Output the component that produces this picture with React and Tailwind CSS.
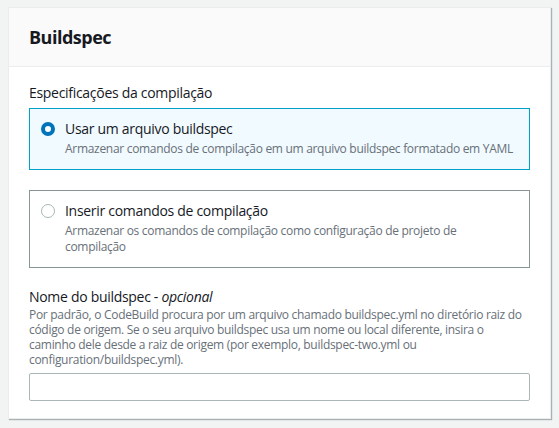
import React, { useState } from 'react';

const options = [
  {
    id: 'file',
    label: 'Usar um arquivo buildspec',
    description: 'Armazenar comandos de compilação em um arquivo buildspec formatado em YAML',
  },
  {
    id: 'commands',
    label: 'Inserir comandos de compilação',
    description: 'Armazenar os comandos de compilação como configuração de projeto de compilação',
  },
];

function Radio({ checked }) {
  if (checked) {
    return <span className="mt-[3px] block h-[14px] w-[14px] shrink-0 rounded-full border-[4px] border-[#0073bb] bg-white" />;
  }
  return <span className="mt-[3px] block h-[14px] w-[14px] shrink-0 rounded-full border-[1.5px] border-[#aab7b8] bg-white" />;
}

export default function App() {
  const [selected, setSelected] = useState('file');

  return (
    <div className="min-h-[428px] bg-[#f2f3f3] px-2 pt-[7px] font-['Open_Sans',sans-serif] tracking-[-0.3px] text-[#16191f]">
      <div className="border border-[#eaeded] bg-white shadow-[1px_1px_1px_0_rgba(0,28,36,0.3)]">
        <div className="flex h-[59px] items-center border-b border-[#eaeded] bg-[#fafafa] px-5">
          <h2 className="text-[18px] font-bold tracking-[-0.5px]">Buildspec</h2>
        </div>

        <div className="px-5 pb-[17px] pt-[16px]">
          <div className="text-[14px] leading-[20px]">Especificações da compilação</div>

          <div className="mt-[5px] flex flex-col gap-[20px]">
            {options.map(opt => {
              const checked = selected === opt.id;
              return (
                <label
                  key={opt.id}
                  onClick={() => setSelected(opt.id)}
                  className={
                    checked
                      ? 'flex cursor-pointer gap-[10px] border border-[#00a1c9] bg-[#f1faff] px-[11px] pb-[12px] pt-[10px]'
                      : 'flex cursor-pointer gap-[10px] border border-[#879596] bg-white px-[11px] pb-[12px] pt-[10px]'
                  }
                >
                  <Radio checked={checked} />
                  <div>
                    <div className="text-[14px] leading-[20px]">{opt.label}</div>
                    <div className="mt-[2px] text-[12px] leading-[16px] text-[#687078]">{opt.description}</div>
                  </div>
                </label>
              );
            })}
          </div>

          <div className="mt-[19px]">
            <div className="text-[14px] leading-[20px]">
              Nome do buildspec - <i>opcional</i>
            </div>
            <p className="text-[12px] leading-[15px] text-[#687078]">
              Por padrão, o CodeBuild procura por um arquivo chamado buildspec.yml no diretório raiz do código de origem. Se o seu arquivo buildspec usa um nome ou local diferente, insira o caminho dele desde a raiz de origem (por exemplo, buildspec-two.yml ou configuration/buildspec.yml).
            </p>
            <input
              type="text"
              className="mt-[6px] block h-[28px] w-full rounded-[2px] border border-[#aab7b8] bg-white px-2 text-[14px] outline-none"
            />
          </div>
        </div>
      </div>
    </div>
  );
}
